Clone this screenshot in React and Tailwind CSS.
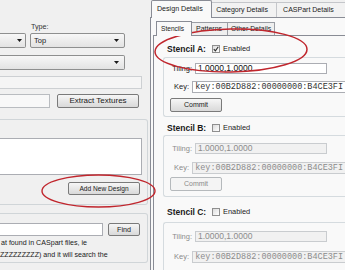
import React from 'react';

const Arrow = () => (
  <svg width="5" height="3" viewBox="0 0 5 3" className="shrink-0">
    <path d="M0 0h5L2.5 3z" fill="#1a1a1a" />
  </svg>
);

function Combo({ className = '', text, arrowPad = 'pr-[5px]' }) {
  return (
    <div className={`flex items-center h-[15px] border border-[#8e8f8f] bg-linear-to-b from-[#f7f7f7] to-[#e3e3e3] ${arrowPad} ${className}`}>
      <span className="flex-1 pl-[3px] text-[7.5px] leading-[8px]">{text}</span>
      <Arrow />
    </div>
  );
}

function Button({ className = '', children, disabled }) {
  return (
    <div
      className={`flex items-center justify-center rounded-[2px] border leading-[8px] ${
        disabled
          ? 'border-[#b5b9bc] bg-[#f4f4f4] text-[#8a8a8a]'
          : 'border-[#7a7a7a] bg-linear-to-b from-[#f6f6f6] to-[#d9d9d9] text-[#1a1a1a]'
      } ${className}`}
    >
      {children}
    </div>
  );
}

function Check({ checked }) {
  return (
    <span className="w-[8px] h-[8px] border border-[#8f8f8f] bg-linear-to-br from-[#dcdcdc] to-white flex items-center justify-center">
      {checked && (
        <svg width="6" height="6" viewBox="0 0 6 6">
          <path d="M0.8 3.1 L2.4 4.9 L5.3 0.8" stroke="#2d2d2d" strokeWidth="1.1" fill="none" />
        </svg>
      )}
    </span>
  );
}

// spacing differs a little per section in the screenshot, so it is passed in
function Stencil({ name, enabled, headerMt, boxMt, boxH, padTop, keyGap, commitGap, showCommit = true }) {
  const label = enabled ? 'text-[#222]' : 'text-[#8c8c8c]';
  const field = enabled
    ? 'bg-white border-[#abadb3] text-[#111]'
    : 'bg-[#f1f1f1] border-[#c9cccf] text-[#8c8c8c]';
  return (
    <div className={headerMt}>
      <div className="h-[14px] flex items-center pl-[13px]">
        <span className="font-bold text-[8.5px] leading-[10px] w-[45px]">{name}</span>
        <Check checked={enabled} />
        <span className="ml-[3px] text-[7.4px] leading-[8px]">Enabled</span>
      </div>
      <div className={`${boxMt} ${boxH} ${padTop} ml-[9px] border border-r-0 border-[#d5dbdf] rounded-l-[3px]`}>
        <div className="flex items-center h-[11px]">
          <span className={`w-[28px] text-right text-[7.5px] leading-[8px] ${label}`}>Tiling:</span>
          <div className={`ml-[3px] w-[132px] h-[11px] border flex items-center pl-[2px] text-[8.5px] leading-[9px] ${field}`}>
            1.0000,1.0000
          </div>
        </div>
        <div className={`flex items-center h-[12px] ${keyGap}`}>
          <span className={`w-[28px] text-right text-[7.5px] leading-[8px] ${label}`}>Key:</span>
          <div className={`ml-[3px] w-[170px] h-[12px] border border-r-0 flex items-center pl-[2px] whitespace-nowrap overflow-hidden font-['Liberation_Mono','Courier_New',monospace] text-[8.5px] leading-[9px] ${enabled ? 'bg-white border-[#abadb3] text-[#333]' : 'bg-[#f1f1f1] border-[#c9cccf] text-[#8c8c8c]'}`}>
            key:00B2D882:00000000:B4CE3FI
          </div>
        </div>
        {showCommit && (
          <Button disabled={!enabled} className={`${commitGap} ml-[6px] w-[52px] h-[14px] text-[7px]`}>
            Commit
          </Button>
        )}
      </div>
    </div>
  );
}

function LeftPanel() {
  return (
    <div className="w-[150px] shrink-0 flex flex-col">
      <div className="h-[33px] pt-[23px] pl-[31px] text-[7.2px] leading-[8px] text-[#333]">Type:</div>
      <div className="flex h-[15px] gap-[4px]">
        <Combo className="w-[26px] border-l-0 rounded-r-[2px]" arrowPad="pr-[3px]" />
        <Combo className="w-[95px] rounded-[2px]" text="Top" />
      </div>
      <Combo className="mt-[7px] w-[125px] border-l-0 rounded-r-[2px]" />
      <div className="mt-[6px] w-[142px] h-[13px] border border-l-0 border-[#cdd0d3] bg-[#f5f5f5]" />
      <div className="mt-[4px] flex items-center h-[15px]">
        <div className="w-[50px] h-[14px] border border-l-0 border-[#b9bcc0] bg-[#f8f8f8]" />
        <Button className="ml-[7px] w-[82px] h-[14px] text-[8px]">Extract Textures</Button>
      </div>
      <div className="mt-[11px] h-[86px] w-[148px] border-t border-r border-b border-[#d0d5d8] rounded-r-[3px] flex flex-col">
        <div className="mt-[18px] h-[37px] w-[142px] bg-white border border-l-0 border-[#abadb3]" />
        <Button className="mt-[7px] ml-[68px] w-[72px] h-[13px] text-[6.6px]">Add New Design</Button>
      </div>
      <div className="mt-[8px] h-[50px] w-[148px] border-t border-r border-b border-[#d0d5d8] rounded-r-[3px] pt-[9px]">
        <div className="flex h-[13px]">
          <div className="w-[103px] h-[13px] bg-white border border-l-0 border-[#abadb3]" />
          <Button className="ml-[5px] w-[32px] h-[13px] text-[7.2px]">Find</Button>
        </div>
        <div className="mt-[1px] text-[7.1px] leading-[12px] whitespace-nowrap text-[#1a1a1a]">
          <div className="pl-[1px]">at found in CASpart files, ie</div>
          <div>ZZZZZZZZZ) and it will search the</div>
        </div>
      </div>
    </div>
  );
}

function RightPanel() {
  return (
    <div className="flex-1 min-w-0 flex flex-col">
      <div className="h-[21px] flex items-end pl-[1px] whitespace-nowrap">
        <div className="relative z-10 w-[63px] h-[18px] -mb-[1px] border border-b-0 border-[#898c95] rounded-t-[2px] bg-[#f9f9f9] pl-[5px] pt-[4px] text-[7.1px] leading-[8px]">
          Design Details
        </div>
        <div className="w-[67px] h-[15px] border-t border-r border-[#c4c6ca] bg-[#f2f2f2] pl-[4px] pt-[3px] text-[7px] leading-[8px]">
          Category Details
        </div>
        <div className="w-[70px] h-[15px] border-t border-[#c4c6ca] bg-[#f2f2f2] pl-[6px] pt-[3px] text-[7px] leading-[8px]">
          CASPart Details
        </div>
      </div>
      <div className="flex-1 border-l border-t border-[#898c95] bg-[#f9f9f9] pl-[2px] flex flex-col">
        <div className="h-[17px] flex items-end pl-[3px] whitespace-nowrap">
          <div className="relative z-10 w-[36px] h-[15px] -mb-[1px] border border-b-0 border-[#898c95] bg-[#f9f9f9] pl-[4px] pt-[3px] text-[6.6px] leading-[8px]">
            Stencils
          </div>
          <div className="w-[36px] h-[13px] border-t border-r border-[#9a9da4] bg-[#efefef] pl-[4px] pt-[2px] text-[7px] leading-[8px]">
            Patterns
          </div>
          <div className="w-[47px] h-[13px] border-t border-r border-[#9a9da4] bg-[#efefef] pl-[3px] pt-[2px] text-[6.9px] leading-[8px]">
            Other Details
          </div>
        </div>
        <div className="flex-1 border-l border-t border-[#898c95] bg-[#f9f9f9]">
          <Stencil
            name="Stencil A:"
            enabled
            headerMt="mt-[6px]"
            boxMt="mt-[1px]"
            boxH="h-[60px]"
            padTop="pt-[5px]"
            keyGap="mt-[7px]"
            commitGap="mt-[5px]"
          />
          <Stencil
            name="Stencil B:"
            headerMt="mt-[4px]"
            boxMt="mt-0"
            boxH="h-[62px]"
            padTop="pt-[7px]"
            keyGap="mt-[8px]"
            commitGap="mt-[3px]"
          />
          <Stencil
            name="Stencil C:"
            headerMt="mt-[8px]"
            boxMt="mt-[3px]"
            boxH="h-[66px]"
            padTop="pt-[8px]"
            keyGap="mt-[9px]"
            showCommit={false}
          />
        </div>
      </div>
    </div>
  );
}

export default function App() {
  return (
    <div className="relative w-[345px] h-[270px] overflow-hidden flex bg-[#f0f0f0] font-['Liberation_Sans',Arial,sans-serif] text-[#1a1a1a] leading-none">
      <LeftPanel />
      <RightPanel />
      <svg className="absolute inset-0 pointer-events-none" width="345" height="270" viewBox="0 0 345 270">
        <ellipse cx="231" cy="50.5" rx="76" ry="21.5" fill="none" stroke="#c0262d" strokeWidth="1.5" transform="rotate(-1 231 50.5)" />
        <ellipse cx="98.5" cy="191" rx="56.5" ry="16" fill="none" stroke="#c0262d" strokeWidth="1.4" />
      </svg>
    </div>
  );
}
